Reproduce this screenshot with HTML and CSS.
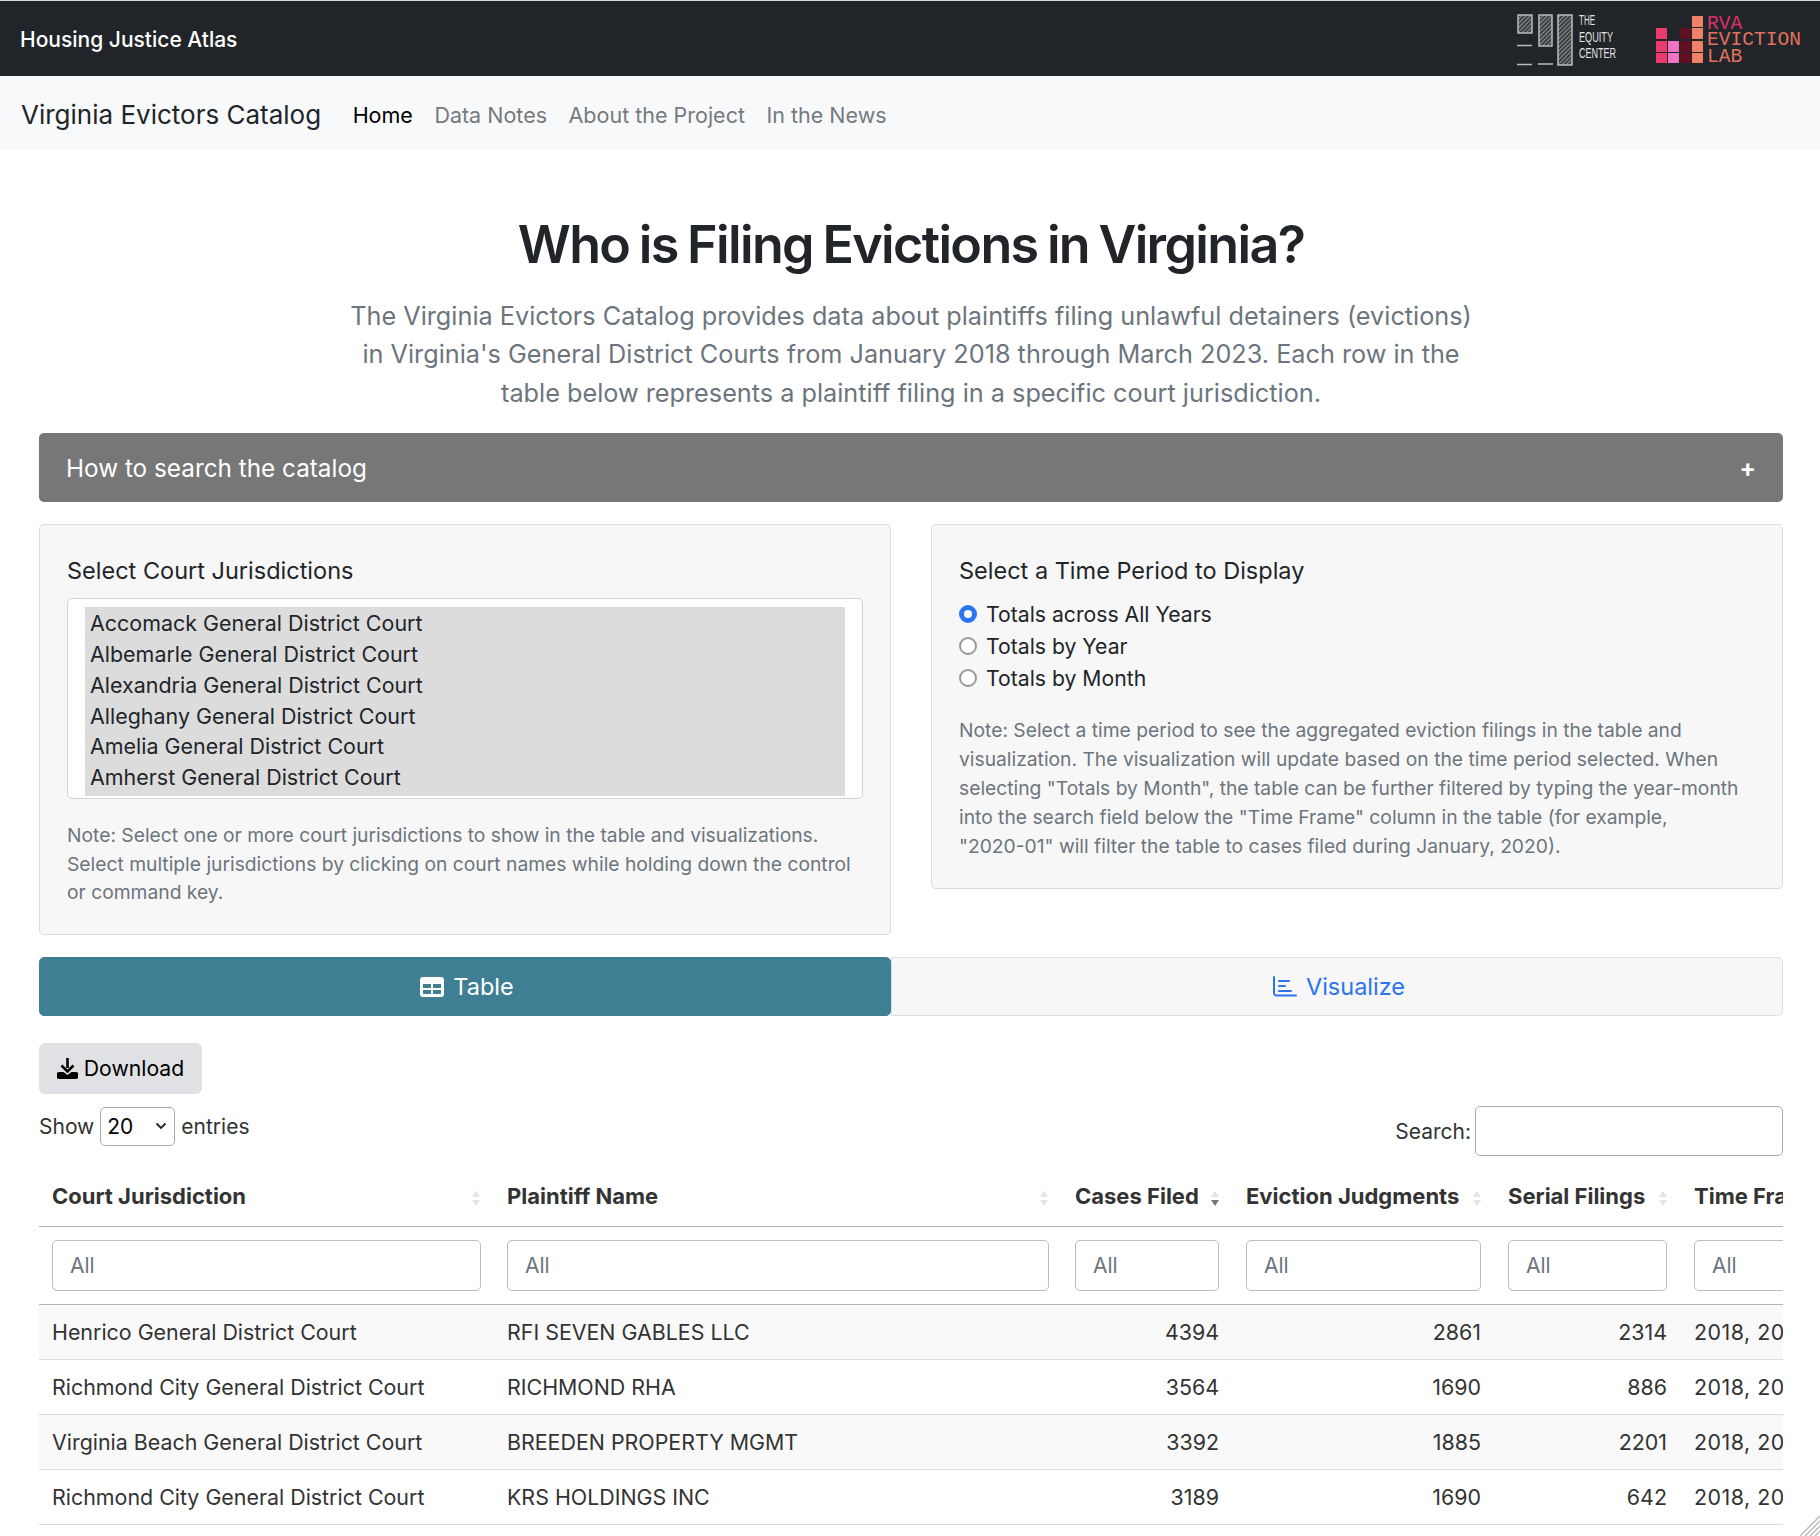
FILE: index.html
```html
<!doctype html>
<html>
<head>
<meta charset="utf-8">
<title>Virginia Evictors Catalog</title>
<link rel="stylesheet" href="styles.css">
</head>
<body>
<header class="topBar">
	<a class="topTitle">Housing Justice Atlas</a>
	<svg class="logos" width="306" height="76" viewBox="1514 0 306 76">
		<defs>
			<pattern id="hatch" width="3" height="3" patternUnits="userSpaceOnUse" patternTransform="rotate(45)">
				<rect width="3" height="3" fill="#33373a"/>
				<rect width="1.200" height="3" fill="#8a8d8f"/>
			</pattern>
		</defs>
		<g class="eqBar">
			<rect x="1518" y="14" width="14" height="18"/>
			<rect x="1539" y="14" width="13" height="31"/>
			<rect x="1558" y="14" width="14" height="50"/>
		</g>
		<path class="eqDash" d="M1517 44.500h15M1517 63.500h15M1538 63h15"/>
		<text class="eqText" x="1579" y="24" textLength="16" lengthAdjust="spacingAndGlyphs">THE</text>
		<text class="eqText" x="1579" y="41" textLength="34" lengthAdjust="spacingAndGlyphs">EQUITY</text>
		<text class="eqText" x="1579" y="57" textLength="37" lengthAdjust="spacingAndGlyphs">CENTER</text>
		<g class="evPink">
			<rect x="1656" y="27" width="11" height="11"/>
			<rect x="1656" y="40" width="11" height="11"/>
			<rect x="1656" y="52" width="11" height="10"/>
		</g>
		<g class="evLight">
			<rect x="1668" y="40" width="11" height="11"/>
			<rect x="1668" y="52" width="11" height="10"/>
		</g>
		<g class="evDark">
			<rect x="1680" y="27" width="11" height="11"/>
			<rect x="1680" y="40" width="11" height="11"/>
			<rect x="1680" y="52" width="11" height="10"/>
		</g>
		<g class="evSalmon">
			<rect x="1692" y="15" width="11" height="11"/>
			<rect x="1692" y="27" width="11" height="11"/>
			<rect x="1692" y="40" width="11" height="11"/>
			<rect x="1692" y="52" width="11" height="10"/>
		</g>
		<text class="evText evRva" x="1707" y="28">RVA</text>
		<text class="evText" x="1707" y="44">EVICTION</text>
		<text class="evText" x="1707" y="61">LAB</text>
	</svg>
</header>

<nav class="navBar">
	<a class="brand">Virginia Evictors Catalog</a>
	<a class="navLink active">Home</a>
	<a class="navLink">Data Notes</a>
	<a class="navLink">About the Project</a>
	<a class="navLink">In the News</a>
</nav>

<main class="page">
	<h1>Who is Filing Evictions in Virginia?</h1>
	<p class="lead">The Virginia Evictors Catalog provides data about plaintiffs filing unlawful detainers (evictions)<br>in Virginia's General District Courts from January 2018 through March 2023. Each row in the<br>table below represents a plaintiff filing in a specific court jurisdiction.</p>

	<div class="accordion">
		<span>How to search the catalog</span>
		<span class="plus">+</span>
	</div>

	<div class="panels">
		<section class="well wellLeft">
			<label class="wellTitle">Select Court Jurisdictions</label>
			<div class="listBox">
				<div class="listInner">
					<div>Accomack General District Court</div>
					<div>Albemarle General District Court</div>
					<div>Alexandria General District Court</div>
					<div>Alleghany General District Court</div>
					<div>Amelia General District Court</div>
					<div>Amherst General District Court</div>
				</div>
			</div>
			<p class="note">Note: Select one or more court jurisdictions to show in the table and visualizations. Select multiple jurisdictions by clicking on court names while holding down the control or command key.</p>
		</section>
		<section class="well wellRight">
			<label class="wellTitle">Select a Time Period to Display</label>
			<div class="radios">
				<label class="radioRow"><input type="radio" name="period" checked>Totals across All Years</label>
				<label class="radioRow"><input type="radio" name="period">Totals by Year</label>
				<label class="radioRow"><input type="radio" name="period">Totals by Month</label>
			</div>
			<p class="note">Note: Select a time period to see the aggregated eviction filings in the table and visualization. The visualization will update based on the time period selected. When selecting "Totals by Month", the table can be further filtered by typing the year-month into the search field below the "Time Frame" column in the table (for example, <span class="noWrap">"2020-01"</span> will filter the table to cases filed during January, 2020).</p>
		</section>
	</div>

	<div class="tabs">
		<a class="tab tabActive">
			<svg width="24" height="20" viewBox="0 0 24 20"><rect x="0" y="0" width="24" height="20" rx="3" fill="#fff"/><path d="M3 7h8v4H3zM13 7h8v4h-8zM3 13h8v4H4a1 1 0 0 1-1-1zM13 13h8v3a1 1 0 0 1-1 1h-7z" fill="#3f7f93"/></svg>
			Table
		</a>
		<a class="tab">
			<svg width="24" height="21" viewBox="0 0 24 21" fill="none" stroke="#2c74f0" stroke-width="2" stroke-linecap="round"><path d="M1 1v16a2.500 2.500 0 0 0 2.500 2.500H23"/><path d="M6 5h10M6 10h6M6 15h12"/></svg>
			Visualize
		</a>
	</div>

	<button class="download">
		<svg width="21" height="21" viewBox="0 0 21 21"><path d="M10.500 0v10" stroke="#000" stroke-width="2.600" fill="none"/><path d="M4.500 7.500l6 6 6-6" stroke="#000" stroke-width="2.600" fill="none"/><path d="M2.500 14h4l4 3 4-3h4a2.500 2.500 0 0 1 0 7h-16a2.500 2.500 0 0 1 0-7z" fill="#000"/></svg>
		Download
	</button>

	<div class="tableTools">
		<div class="lengthBox">Show
			<span class="lengthSelect">20
				<svg width="12" height="8" viewBox="0 0 12 8" fill="none" stroke="#222" stroke-width="1.800"><path d="M1.500 1.500l4.500 4.500 4.500-4.500"/></svg>
			</span>
			entries
		</div>
		<label class="searchBox">Search: <input type="text"></label>
	</div>

	<div class="tableClip">
		<table class="catalog">
			<colgroup>
				<col class="c1"><col class="c2"><col class="c3"><col class="c4"><col class="c5"><col class="c6">
			</colgroup>
			<thead>
				<tr class="headRow">
					<th>Court Jurisdiction<span class="sort"><i></i><b></b></span></th>
					<th>Plaintiff Name<span class="sort"><i></i><b></b></span></th>
					<th>Cases Filed<span class="sort sortDown"><i></i><b></b></span></th>
					<th>Eviction Judgments<span class="sort"><i></i><b></b></span></th>
					<th>Serial Filings<span class="sort"><i></i><b></b></span></th>
					<th>Time Frame<span class="sort"><i></i><b></b></span></th>
				</tr>
				<tr class="filterRow">
					<td><input type="text" placeholder="All"></td>
					<td><input type="text" placeholder="All"></td>
					<td class="numFilter"><input type="text" placeholder="All"></td>
					<td class="numFilter"><input type="text" placeholder="All"></td>
					<td class="numFilter"><input type="text" placeholder="All"></td>
					<td><input type="text" placeholder="All"></td>
				</tr>
			</thead>
			<tbody>
				<tr><td>Henrico General District Court</td><td>RFI SEVEN GABLES LLC</td><td class="num">4394</td><td class="num">2861</td><td class="num">2314</td><td class="years">2018, 2019, 2020</td></tr>
				<tr><td>Richmond City General District Court</td><td>RICHMOND RHA</td><td class="num">3564</td><td class="num">1690</td><td class="num">886</td><td class="years">2018, 2019, 2020</td></tr>
				<tr><td>Virginia Beach General District Court</td><td>BREEDEN PROPERTY MGMT</td><td class="num">3392</td><td class="num">1885</td><td class="num">2201</td><td class="years">2018, 2019, 2020</td></tr>
				<tr><td>Richmond City General District Court</td><td>KRS HOLDINGS INC</td><td class="num">3189</td><td class="num">1690</td><td class="num">642</td><td class="years">2018, 2019, 2020</td></tr>
			</tbody>
		</table>
	</div>
</main>

<svg class="grip" width="20" height="20" viewBox="0 0 20 20" fill="none" stroke="#bcbcbc" stroke-width="1.500"><path d="M0 20L20 0M5 20L20 5M10 20L20 10M15 20l5-5"/></svg>
</body>
</html>
```

FILE: styles.css
```css
html, body {
	height: 1536px;
	overflow: hidden;
}
body {
	margin: 0;
	background: #fff;
	color: #212529;
	font-family: Inter, "Noto Sans", sans-serif;
	font-size: 20px;
	position: relative;
}
.topBar {
	height: 75px;
	border-top: 1px solid #d8d8d8;
	background: #212529;
	display: flex;
	align-items: center;
	justify-content: space-between;
	padding-left: 20px;
}
.topTitle {
	color: #fff;
	font-size: 21px;
	font-weight: 500;
	padding-top: 2px;
}
.logos {
	display: block;
}
.eqBar rect {
	fill: url(#hatch);
	stroke: #b9bbbc;
	stroke-width: 1.500;
}
.eqDash {
	stroke: #b9bbbc;
	stroke-width: 1.500;
	fill: none;
}
.eqText {
	fill: #e2e3e3;
	font-family: "Liberation Sans", sans-serif;
	font-size: 14px;
}
.evPink { fill: #ea3b6d; }
.evLight { fill: #ee74c2; }
.evDark { fill: #5f1022; }
.evSalmon { fill: #ee8168; }
.evText {
	fill: #e2725f;
	font-family: "Liberation Mono", monospace;
	font-size: 19.600px;
}
.evRva { fill: #d9316c; }

.navBar {
	box-sizing: border-box;
	height: 74px;
	background: #f8f9fa;
	display: flex;
	align-items: center;
	padding: 3px 0 0 21px;
	gap: 21.500px;
}
.brand {
	font-size: 26px;
	margin-right: 10px;
}
.navLink {
	color: #767a7e;
	font-size: 21.500px;
}
.navLink.active {
	color: #000;
}

.page {
	padding: 0 37px 0 39px;
}
h1 {
	margin: 0;
	padding-top: 65px;
	text-align: center;
	font-size: 52px;
	line-height: 60px;
	font-weight: 600;
	letter-spacing: -1.650px;
	word-spacing: -2px;
}
.lead {
	margin: 22px 0 21px;
	text-align: center;
	color: #6c757d;
	font-size: 25.250px;
	line-height: 38.400px;
}
.accordion {
	height: 69px;
	background: #777;
	color: #fff;
	border-radius: 5px;
	display: flex;
	align-items: center;
	justify-content: space-between;
	padding: 0 27px;
	font-size: 24.300px;
}
.plus {
	font-weight: 700;
}
.panels {
	margin-top: 22px;
	display: flex;
	align-items: flex-start;
	gap: 40px;
}
.well {
	flex: 1;
	box-sizing: border-box;
	background: #f7f7f7;
	border: 1px solid #dcdcdc;
	border-radius: 5px;
	padding: 30px 27px 0;
}
.wellLeft { height: 411px; }
.wellRight { height: 365px; }
.wellTitle {
	display: block;
	font-size: 23.500px;
	line-height: 32px;
}
.listBox {
	margin-top: 11px;
	background: #fff;
	border: 1px solid #ced4da;
	border-radius: 5px;
	padding: 8px 17px 2px;
}
.listInner {
	background: #dcdcdc;
	padding: 1px 5px 3px;
	font-size: 21.450px;
	line-height: 30.800px;
}
.note {
	margin: 0;
	color: #6c757d;
	font-size: 19.250px;
	line-height: 28.500px;
}
.noWrap {
	white-space: nowrap;
}
.wellLeft .note { margin-top: 22px; }
.wellRight .note { margin-top: 22px; line-height: 28.900px; }
.radios {
	margin-top: 11px;
}
.radioRow {
	display: flex;
	align-items: center;
	font-size: 21.200px;
	line-height: 32px;
}
.radioRow input {
	appearance: none;
	box-sizing: border-box;
	width: 18px;
	height: 18px;
	margin: 0 9px 0 0;
	border-radius: 50%;
	border: 2.500px solid #97979f;
	background: #fff;
}
.radioRow input:checked {
	border: 5px solid #2c74f0;
}
.tabs {
	margin-top: 22px;
	display: flex;
}
.tab {
	flex: 1;
	height: 59px;
	box-sizing: border-box;
	display: flex;
	align-items: center;
	justify-content: center;
	gap: 9px;
	padding-left: 4px;
	background: #f7f7f7;
	border: 1px solid #dedede;
	border-radius: 0 5px 5px 0;
	color: #2c74f0;
	font-size: 23.500px;
}
.tabActive {
	flex: none;
	width: 852px;
	background: #3f7f93;
	border-color: #3f7f93;
	border-radius: 5px;
	color: #fff;
}
.download {
	margin-top: 27px;
	width: 163px;
	height: 51px;
	padding-bottom: 2px;
	display: flex;
	align-items: center;
	justify-content: center;
	gap: 6px;
	background: #dfe1e4;
	border: 0;
	border-radius: 6px;
	color: #000;
	font-family: inherit;
	font-size: 21.200px;
}
.tableTools {
	margin-top: 12px;
	height: 50px;
	display: flex;
	align-items: flex-start;
	justify-content: space-between;
	color: #333;
	font-size: 21px;
}
.lengthBox {
	display: flex;
	align-items: center;
	gap: 6px;
	height: 40px;
}
.lengthSelect {
	box-sizing: border-box;
	width: 75px;
	height: 39px;
	border: 1px solid #aaa;
	border-radius: 5px;
	display: flex;
	align-items: center;
	justify-content: space-between;
	padding: 0 7px 0 6px;
	color: #000;
}
.searchBox {
	display: flex;
	align-items: center;
	gap: 4px;
}
.searchBox input {
	box-sizing: border-box;
	width: 308px;
	height: 50px;
	border: 1px solid #aaa;
	border-radius: 5px;
}
.tableClip {
	margin-top: 13px;
	overflow: hidden;
}
.catalog {
	width: 1900px;
	table-layout: fixed;
	border-collapse: collapse;
	color: #333;
	font-size: 21.400px;
}
.c1 { width: 455px; }
.c2 { width: 568px; }
.c3 { width: 171px; }
.c4 { width: 262px; }
.c5 { width: 186px; }
.catalog th {
	height: 57px;
	position: relative;
	box-sizing: border-box;
	padding: 0 13px 2px;
	text-align: left;
	font-size: 22px;
	font-weight: 700;
	white-space: nowrap;
	border-bottom: 1px solid #b4b4b4;
}
.sort {
	position: absolute;
	right: 14px;
	top: 22px;
	display: flex;
	flex-direction: column;
	gap: 3px;
}
.sort i {
	border: 4px solid transparent;
	border-top: 0;
	border-bottom: 6px solid #e4e4e4;
}
.sort b {
	border: 4px solid transparent;
	border-bottom: 0;
	border-top: 6px solid #e4e4e4;
}
.sortDown b {
	border-top-color: #777;
}
.filterRow td {
	height: 78px;
	box-sizing: border-box;
	padding: 0 13px;
	border-bottom: 1px solid #b4b4b4;
}
.filterRow td.numFilter {
	padding-right: 14px;
}
.filterRow input {
	box-sizing: border-box;
	width: 100%;
	height: 51px;
	padding: 0 17px;
	border: 1px solid #bdbdbd;
	border-radius: 5px;
	background: #fff;
	font-family: inherit;
	font-size: 21px;
}
.filterRow input::placeholder {
	color: #6c757d;
	opacity: 1;
}
.catalog tbody td {
	height: 55px;
	box-sizing: border-box;
	padding: 0 13px;
	white-space: nowrap;
	overflow: hidden;
	border-bottom: 1px solid #dcdcdc;
}
.catalog tbody tr:nth-child(odd) td {
	background: #f9f9f9;
}
.catalog tbody .num {
	text-align: right;
	padding-right: 14px;
}
.catalog tbody .years {
	letter-spacing: 0.500px;
}
.grip {
	position: absolute;
	right: 0;
	bottom: 0;
}
```
